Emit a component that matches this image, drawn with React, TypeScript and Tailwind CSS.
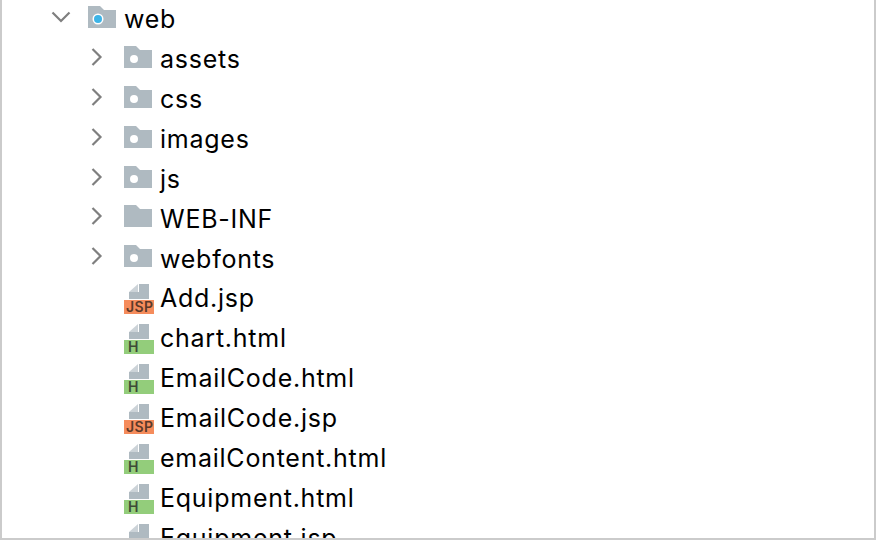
const fontFamily = "font-['Inter','Liberation_Sans',sans-serif]";

function Chevron({ open }: { open?: boolean }) {
  return (
    <svg width="20" height="20" viewBox="0 0 20 20" fill="none" stroke="#7f7f7f" strokeWidth="2.2" className="mb-[6px]">
      {open ? <path d="M1.5 5.5l8.5 8.5 8.5-8.5" /> : <path d="M5.5 2l8 8-8 8" />}
    </svg>
  );
}

function Folder({ dot, source }: { dot?: boolean; source?: boolean }) {
  return (
    <svg width="28" height="22" viewBox="0 0 28 22" className="mb-[6px]">
      <path d="M0 0h12l4 4h12v18H0z" fill="#afbac1" />
      {dot && <circle cx="10" cy="13" r={source ? 5.5 : 4} fill="#fff" />}
      {source && <circle cx="10" cy="13" r="4" fill="#3cb4e7" />}
    </svg>
  );
}

function FileIcon({ kind }: { kind: "JSP" | "H" }) {
  const band = kind === "JSP" ? "bg-[#f58c5c] pl-[2px] tracking-[0.4px] text-[#5a3a2a]" : "bg-[#93cd7b] pl-[4px] tracking-normal text-[#3d4a37]";
  return (
    <div className="flex w-[30px] flex-col items-center">
      <svg width="20" height="16" viewBox="0 0 20 16" className="block">
        <path d="M10 0h10v15H0V8h10z" fill="#afbac1" />
        <path d="M9 0v8H0z" fill="#ccd3d8" />
      </svg>
      <div className={`flex h-[14px] w-[30px] items-center text-[14px] leading-none font-semibold ${band}`}>
        {kind}
      </div>
    </div>
  );
}

type Item = { name: string; folder?: "plain" | "dot"; file?: "JSP" | "H" };

const items: Item[] = [
  { name: "assets", folder: "dot" },
  { name: "css", folder: "dot" },
  { name: "images", folder: "dot" },
  { name: "js", folder: "dot" },
  { name: "WEB-INF", folder: "plain" },
  { name: "webfonts", folder: "dot" },
  { name: "Add.jsp", file: "JSP" },
  { name: "chart.html", file: "H" },
  { name: "EmailCode.html", file: "H" },
  { name: "EmailCode.jsp", file: "JSP" },
  { name: "emailContent.html", file: "H" },
  { name: "Equipment.html", file: "H" },
  { name: "Equipment.jsp", file: "JSP" },
];

export default function App() {
  return (
    <div className={`h-[540px] w-[876px] overflow-hidden border-x-2 border-b-2 border-[#cbcbcb] bg-white text-[25px] tracking-[0.75px] text-black ${fontFamily}`}>
      <div className="flex h-[39.9px] items-center">
        <div className="ml-[49px] flex w-[37px] shrink-0">
          <Chevron open />
        </div>
        <Folder dot source />
        <span className="ml-[8px]">web</span>
      </div>
      {items.map((item) => (
        <div key={item.name} className="flex h-[39.9px] items-center">
          <div className="ml-[85px] flex w-[37px] shrink-0">
            {item.folder && <Chevron />}
          </div>
          {item.folder && <Folder dot={item.folder === "dot"} />}
          {item.file && <FileIcon kind={item.file} />}
          <span className={item.file ? "ml-[6px]" : "ml-[8px]"}>{item.name}</span>
        </div>
      ))}
    </div>
  );
}
